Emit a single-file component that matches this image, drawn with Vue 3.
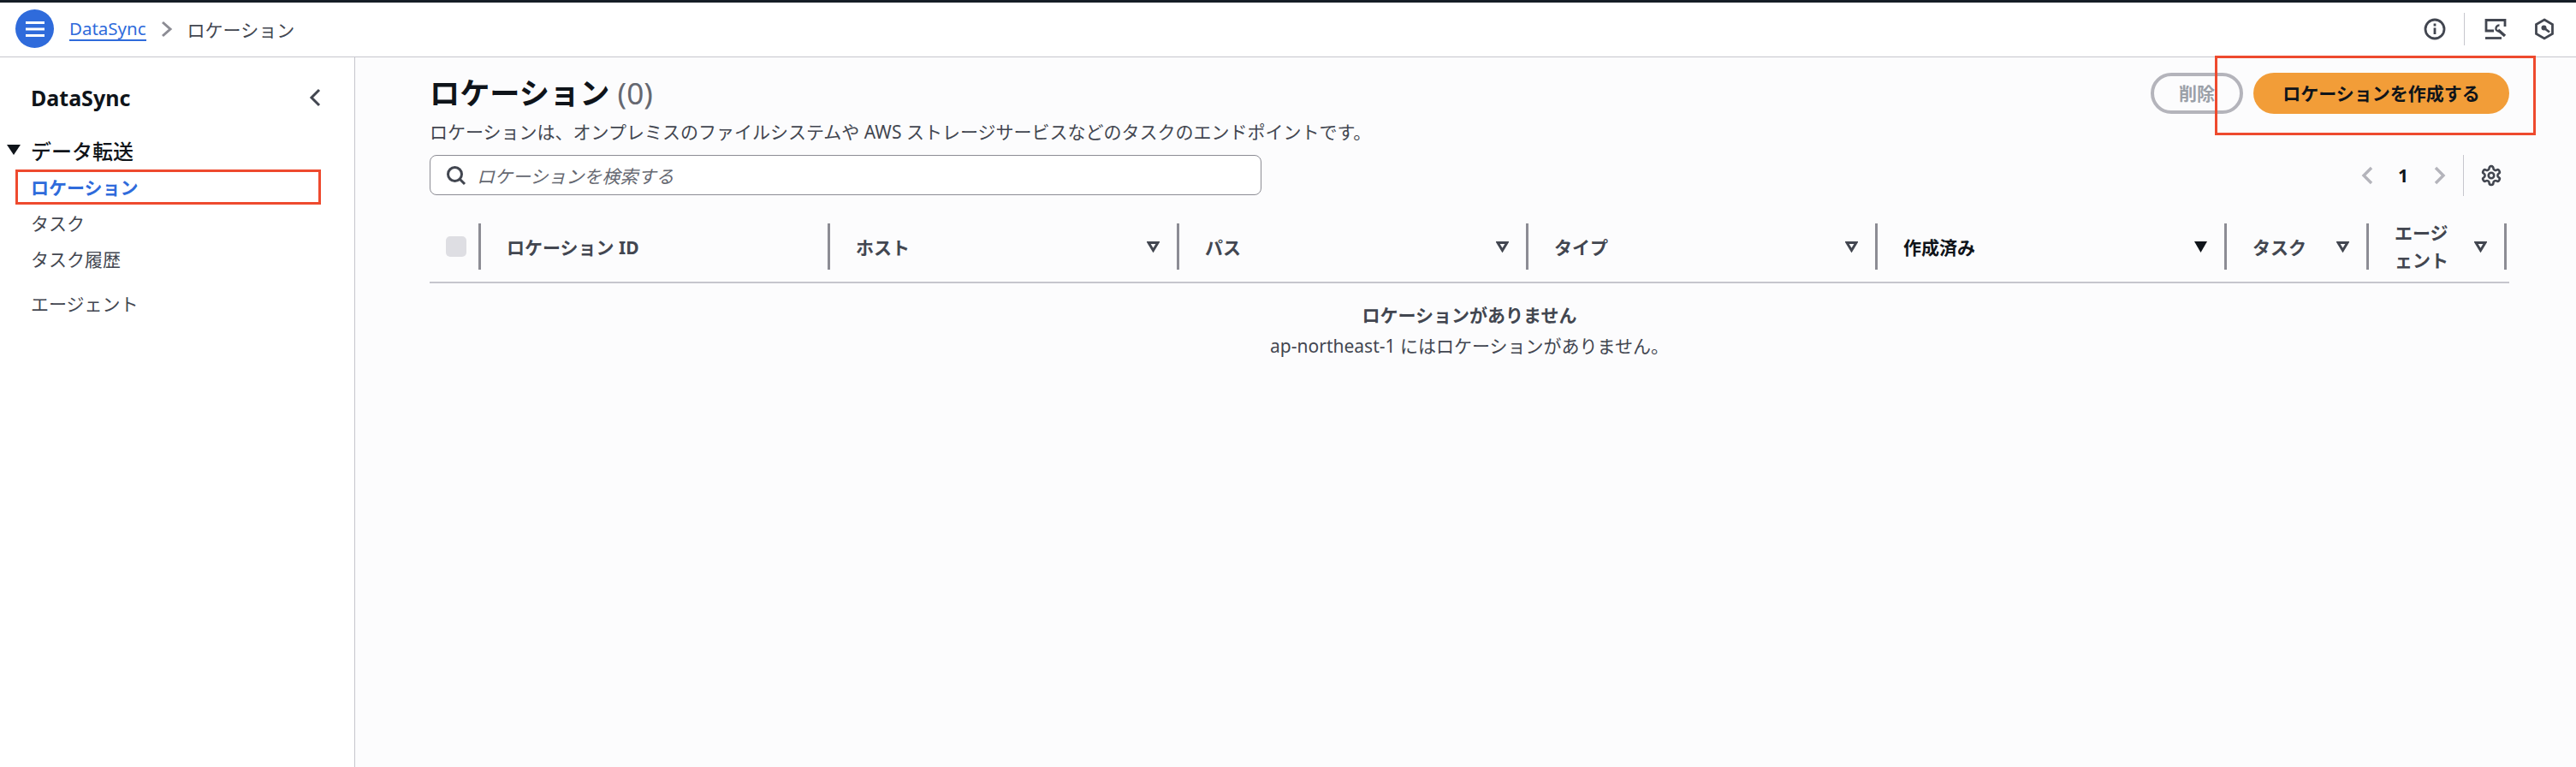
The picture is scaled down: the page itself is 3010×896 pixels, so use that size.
<script setup>
const columns = [
  { label: 'ロケーション ID', sort: false, width: 408 },
  { label: 'ホスト', sort: true, width: 408 },
  { label: 'パス', sort: true, width: 408 },
  { label: 'タイプ', sort: true, width: 408 },
  { label: '作成済み', sort: true, width: 408, active: true },
  { label: 'タスク', sort: true, width: 166 },
  { label: 'エージェント', sort: true, width: 164, narrow: true },
]
</script>

<template>
  <div class="page">
    <header class="topbar">
      <div class="menu-btn">
        <svg width="24" height="20" viewBox="0 0 24 20"><path d="M1 2.500h22M1 10h22M1 17.500h22" stroke="#fff" stroke-width="3" fill="none" /></svg>
      </div>
      <a class="crumb-link">DataSync</a>
      <svg class="crumb-sep" width="14" height="20" viewBox="0 0 14 20"><path d="M2 2l9 8-9 8" stroke="#8c8c94" stroke-width="3" fill="none" /></svg>
      <span class="crumb-current">ロケーション</span>
      <div class="top-actions">
        <svg width="26" height="26" viewBox="0 0 26 26" fill="none" stroke="#424650" stroke-width="2.800"><circle cx="13" cy="13" r="11" /><path d="M13 11.500v7.500M13 6.500v3" /></svg>
        <span class="top-divider"></span>
        <svg class="tool-icon" width="26" height="26" viewBox="0 0 26 26" fill="none" stroke="#424650" stroke-width="2.800"><path d="M11 15H2V2.500h22V10" /><path d="M1 23.500h19" /><path d="M24 21l-8-7" stroke-width="3.500" /><path d="M17.500 8.500a4 4 0 0 0-4 5 4 4 0 0 0 5.500 1.500" stroke-width="2.400" /></svg>
        <svg width="24" height="26" viewBox="0 0 24 26" fill="none" stroke="#424650" stroke-width="2.800"><path d="M12 2l9.500 5.500v11L12 24l-9.500-5.500v-11z" /><path d="M12 12l6 4.500" /><circle cx="11.500" cy="11.500" r="3" fill="#424650" stroke="none" /></svg>
      </div>
    </header>

    <div class="body">
      <aside class="sidebar">
        <div class="side-head">
          <span class="side-title">DataSync</span>
          <svg width="14" height="22" viewBox="0 0 14 22"><path d="M12 2l-9 9 9 9" stroke="#424650" stroke-width="3" fill="none" /></svg>
        </div>
        <div class="side-group">
          <svg class="caret" width="16" height="12" viewBox="0 0 16 12"><path d="M0 0h16l-8 12z" fill="#0f141a" /></svg>
          <span>データ転送</span>
        </div>
        <ul class="side-list">
          <li class="active">ロケーション</li>
          <li>タスク</li>
          <li>タスク履歴</li>
          <li class="spaced">エージェント</li>
        </ul>
        <span class="mark mark-side"></span>
      </aside>

      <main class="content">
        <div class="head-row">
          <div>
            <h1>ロケーション <span class="count">(0)</span></h1>
            <p class="desc">ロケーションは、オンプレミスのファイルシステムや AWS ストレージサービスなどのタスクのエンドポイントです。</p>
          </div>
          <div class="head-actions">
            <button class="btn-delete">削除</button>
            <button class="btn-create">ロケーションを作成する</button>
          </div>
        </div>

        <div class="tools-row">
          <div class="search">
            <svg width="24" height="24" viewBox="0 0 24 24" fill="none" stroke="#424650" stroke-width="3"><circle cx="10.500" cy="10.500" r="8" /><path d="M16 16l6 6" /></svg>
            <span>ロケーションを検索する</span>
          </div>
          <div class="pager">
            <svg width="14" height="22" viewBox="0 0 14 22"><path d="M12 2l-9 9 9 9" stroke="#b4b4bb" stroke-width="3.400" fill="none" /></svg>
            <span class="page-num">1</span>
            <svg width="14" height="22" viewBox="0 0 14 22"><path d="M2 2l9 9-9 9" stroke="#b4b4bb" stroke-width="3.400" fill="none" /></svg>
            <span class="pager-div"></span>
            <svg width="26" height="26" viewBox="0 0 24 24" fill="none" stroke="#424650" stroke-width="2.400"><path d="M12.220 2h-.44a2 2 0 0 0-2 2v.18a2 2 0 0 1-1 1.730l-.43.25a2 2 0 0 1-2 0l-.15-.08a2 2 0 0 0-2.730.73l-.22.38a2 2 0 0 0 .73 2.730l.15.1a2 2 0 0 1 1 1.720v.51a2 2 0 0 1-1 1.740l-.15.09a2 2 0 0 0-.73 2.730l.22.38a2 2 0 0 0 2.730.73l.15-.08a2 2 0 0 1 2 0l.43.25a2 2 0 0 1 1 1.730V20a2 2 0 0 0 2 2h.44a2 2 0 0 0 2-2v-.18a2 2 0 0 1 1-1.730l.43-.25a2 2 0 0 1 2 0l.15.08a2 2 0 0 0 2.730-.73l.22-.39a2 2 0 0 0-.73-2.730l-.15-.08a2 2 0 0 1-1-1.740v-.5a2 2 0 0 1 1-1.740l.15-.09a2 2 0 0 0 .73-2.730l-.22-.38a2 2 0 0 0-2.730-.73l-.15.08a2 2 0 0 1-2 0l-.43-.25a2 2 0 0 1-1-1.730V4a2 2 0 0 0-2-2z" /><circle cx="12" cy="12" r="3" /></svg>
          </div>
        </div>

        <div class="thead">
          <div class="th-check"><span class="checkbox"></span></div>
          <div
            v-for="col in columns"
            :key="col.label"
            class="th"
            :class="{ 'th-active': col.active }"
            :style="{ width: col.width + 'px' }"
          >
            <span class="th-label" :class="{ narrow: col.narrow }">{{ col.label }}</span>
            <svg v-if="col.sort" class="sort" width="15" height="13" viewBox="0 0 15 13">
              <path v-if="col.active" d="M0 0h15L7.500 13z" fill="#0f141a" />
              <path v-else d="M2 1.500h11L7.500 10.500z" fill="none" stroke="#424650" stroke-width="3" />
            </svg>
          </div>
        </div>

        <div class="empty">
          <strong>ロケーションがありません</strong>
          <span>ap-northeast-1 にはロケーションがありません。</span>
        </div>
      </main>
    </div>
    <span class="mark mark-top"></span>
  </div>
</template>

<style>
html, body { margin: 0; background: #fcfcfd; }
</style>

<style scoped>
.page {
  position: relative;
  width: 3010px;
  height: 896px;
  overflow: hidden;
  background: #fcfcfd;
  color: #424650;
  font-family: "Noto Sans", "Noto Sans CJK JP", sans-serif;
  font-size: 21px;
}
.topbar {
  box-sizing: border-box;
  height: 67px;
  display: flex;
  align-items: center;
  background: #fff;
  border-top: 3px solid #161d26;
  border-bottom: 1px solid #c6c6cd;
  padding: 0 25px 2px 18px;
}
.menu-btn {
  width: 45px;
  height: 45px;
  border-radius: 50%;
  background: #2f6bdb;
  display: flex;
  align-items: center;
  justify-content: center;
}
.crumb-link {
  margin-left: 18px;
  color: #2f6bdb;
  border-bottom: 2px solid #2f6bdb;
  line-height: 26px;
  font-size: 20.500px;
}
.crumb-sep { margin: 0 17px 0 17px; }
.top-actions {
  margin-left: auto;
  display: flex;
  align-items: center;
}
.top-divider {
  width: 1px;
  height: 38px;
  background: #c6c6cd;
  margin: 0 23px 0 21px;
}
.tool-icon { margin-right: 32px; }
.body { display: flex; height: 829px; }
.sidebar {
  position: relative;
  box-sizing: border-box;
  width: 415px;
  background: #fff;
  border-right: 1px solid #c6c6cd;
  padding-top: 28px;
}
.side-head {
  display: flex;
  align-items: center;
  justify-content: space-between;
  padding: 0 39px 0 36px;
  height: 38px;
}
.side-title { font-size: 25px; font-weight: 700; color: #0f141a; }
.side-group {
  display: flex;
  align-items: center;
  margin-top: 24px;
  padding-left: 8px;
  font-size: 24px;
  font-weight: 500;
  color: #0f141a;
  height: 36px;
}
.caret { margin-right: 12px; }
.side-list { list-style: none; margin: 5px 0 0; padding: 0 0 0 36px; }
.side-list li { height: 42px; line-height: 42px; }
.side-list li.active { color: #2f6bdb; font-weight: 700; }
.side-list li.spaced { margin-top: 10px; }
.mark {
  position: absolute;
  box-sizing: border-box;
  border: 3px solid #ee4a2e;
  pointer-events: none;
}
.mark-side { left: 18px; top: 131px; width: 357px; height: 41px; }
.mark-top { left: 2588px; top: 65px; width: 375px; height: 93px; }
.content {
  flex: 1;
  min-width: 0;
  padding: 18px 78px 0 87px;
}
.head-row {
  display: flex;
  justify-content: space-between;
  align-items: flex-start;
  height: 96px;
}
h1 {
  margin: 0;
  font-size: 35.200px;
  font-weight: 700;
  line-height: 46px;
  color: #0f141a;
  white-space: nowrap;
}
.count { font-weight: 400; color: #656871; }
.desc { margin: 8px 0 0; line-height: 30px; white-space: nowrap; }
.head-actions { display: flex; gap: 12px; }
button {
  box-sizing: border-box;
  height: 48px;
  border-radius: 24px;
  font: inherit;
  font-weight: 700;
  padding: 0 0 2px;
}
.btn-delete {
  width: 108px;
  background: transparent;
  border: 4px solid #b4b4bb;
  color: #9ba0a8;
}
.btn-create {
  width: 299px;
  background: #f29d38;
  border: none;
  color: #0f141a;
}
.tools-row {
  display: flex;
  justify-content: space-between;
  align-items: center;
  height: 47px;
}
.search {
  box-sizing: border-box;
  width: 972px;
  height: 47px;
  display: flex;
  align-items: center;
  gap: 12px;
  padding: 0 16px 0 18px;
  background: #fff;
  border: 1.500px solid #8c8c94;
  border-radius: 8px;
  font-style: italic;
  color: #656871;
}
.pager { display: flex; align-items: center; padding-right: 8px; }
.page-num { font-weight: 700; color: #0f141a; margin: 0 30px 0 29px; }
.pager-div { width: 1px; height: 48px; background: #c6c6cd; margin: 0 19px 0 20px; }
.thead {
  display: flex;
  height: 54px;
  margin-top: 33px;
  padding-bottom: 14px;
  border-bottom: 2px solid #c6c6cd;
  width: 2430px;
}
.th-check { width: 57px; height: 54px; display: flex; align-items: center; padding-left: 19px; box-sizing: border-box; }
.checkbox { width: 24px; height: 24px; border-radius: 5px; background: #dedee3; }
.th {
  position: relative;
  box-sizing: border-box;
  height: 54px;
  display: flex;
  align-items: center;
  justify-content: space-between;
  padding: 0 20px 0 30px;
  font-weight: 700;
  border-left: 3px solid #8c8c94;
}
.th:last-child { border-right: 3px solid #8c8c94; }
.th-label { white-space: nowrap; }
.th-label.narrow { white-space: normal; width: 64px; line-height: 32px; }
.th-active { color: #0f141a; }
.empty {
  display: flex;
  flex-direction: column;
  align-items: center;
  gap: 6px;
  width: 2430px;
  padding-top: 22px;
  line-height: 30px;
}
</style>
